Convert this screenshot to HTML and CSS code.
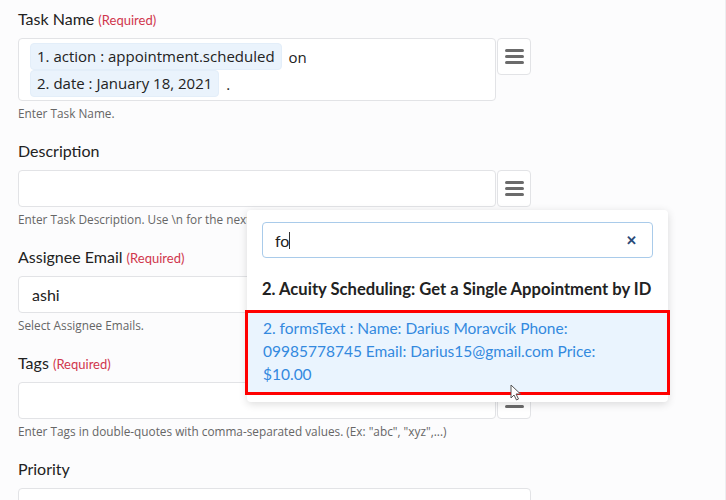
FILE: index.html
```html
<!DOCTYPE html>
<html lang="en">
  <head>
    <meta charset="UTF-8" />
    <meta name="viewport" content="width=device-width, initial-scale=1.0" />
    <title>Task Form</title>
    <link rel="stylesheet" href="styles.css">
  </head>
  <body>
    <div class="page">
      <div class="form">
        <div class="field">
          <label>Task Name <span class="req">(Required)</span></label>
          <div class="row">
            <div class="box tall">
              <div class="line"><span class="chip">1. action : appointment.scheduled</span> <span class="plain">on</span></div>
              <div class="line"><span class="chip">2. date : January 18, 2021</span> <span class="plain">.</span></div>
            </div>
            <button class="menu"><span></span><span></span><span></span></button>
          </div>
          <p class="help">Enter Task Name.</p>
        </div>

        <div class="field">
          <label>Description</label>
          <div class="row">
            <div class="box"></div>
            <button class="menu"><span></span><span></span><span></span></button>
          </div>
          <p class="help">Enter Task Description. Use \n for the next line.</p>
        </div>

        <div class="field">
          <label>Assignee Email <span class="req">(Required)</span></label>
          <div class="row">
            <div class="box wide"><span class="value">ashi</span></div>
          </div>
          <p class="help">Select Assignee Emails.</p>
        </div>

        <div class="field">
          <label>Tags <span class="req">(Required)</span></label>
          <div class="row">
            <div class="box"></div>
            <button class="menu"><span></span><span></span><span></span></button>
          </div>
          <p class="help">Enter Tags in double-quotes with comma-separated values. (Ex: "abc", "xyz",...)</p>
        </div>

        <div class="field">
          <label>Priority</label>
          <div class="row">
            <div class="box wide"></div>
          </div>
        </div>
      </div>

      <div class="popup">
        <div class="search">
          <span class="typed">fo</span><span class="caret"></span>
          <span class="clear">&#x2715;</span>
        </div>
        <h4>2. Acuity Scheduling: Get a Single Appointment by ID</h4>
        <div class="option">2. formsText : Name: Darius Moravcik Phone: 09985778745 Email: Darius15@gmail.com Price: $10.00</div>
      </div>

      <svg class="pointer" width="12" height="18" viewBox="0 0 12 18">
        <path d="M1 1 L1 14 L4 11 L6.5 16 L8.5 15 L6 10 L10.5 10 Z" fill="#fff" stroke="#555" stroke-width="1"/>
      </svg>
    </div>
  </body>
</html>
```

FILE: styles.css
```css
body {
  margin: 0;
  background: #fcfcfd;
  font-family: Lato, "Open Sans", sans-serif;
  color: #222;
}
.page {
  position: relative;
  width: 725px;
  height: 500px;
  border-right: 1px solid #ededf0;
  overflow: hidden;
}
.form {
  width: 513px;
  padding: 8px 0 0 18px;
}
.field {
  margin-bottom: 19px;
}
label {
  display: block;
  height: 22px;
  font-size: 16px;
  line-height: 22px;
  margin-bottom: 8px;
}
.req {
  color: #d0364c;
  font-size: 13px;
  line-height: 1;
}
.row {
  display: flex;
  gap: 1px;
  align-items: flex-start;
}
.box {
  box-sizing: border-box;
  width: 478px;
  height: 37px;
  background: #fff;
  border: 1px solid #e2e3e6;
  border-radius: 4px;
  padding: 0 13px;
  display: flex;
  align-items: center;
}
.box.wide {
  width: 513px;
}
.box.tall {
  height: 63px;
  padding: 5px 11px;
  flex-direction: column;
  align-items: flex-start;
  gap: 2px;
}
.line {
  display: flex;
  align-items: center;
  gap: 7px;
  height: 25px;
}
.chip {
  font-family: "Open Sans", sans-serif;
  font-size: 15px;
  line-height: 25px;
  padding: 0 6px;
  background: #eaf3fc;
  border: 1px solid #e3eef9;
  border-radius: 4px;
  color: #222;
}
.plain {
  font-family: "Open Sans", sans-serif;
  font-size: 15px;
}
.value {
  font-size: 16px;
}
.menu {
  box-sizing: border-box;
  width: 34px;
  height: 37px;
  background: #fff;
  border: 1px solid #e2e3e6;
  border-radius: 4px;
  display: flex;
  flex-direction: column;
  justify-content: center;
  align-items: center;
  gap: 3px;
  padding: 0;
}
.menu span {
  display: block;
  width: 19px;
  height: 3px;
  border-radius: 2px;
  background: #6b6b6b;
}
.help {
  margin: 4px 0 0;
  font-family: "Open Sans", sans-serif;
  font-size: 11.8px;
  line-height: 16px;
  color: #666;
  white-space: nowrap;
}
.popup {
  position: absolute;
  left: 247px;
  top: 210px;
  width: 421px;
  box-sizing: border-box;
  padding: 12px 0 10px;
  background: #fff;
  border-radius: 4px;
  box-shadow: 0 2px 8px rgba(0, 0, 0, 0.14);
}
.search {
  box-sizing: border-box;
  margin: 0 15px;
  height: 36px;
  border: 1px solid #a9cbea;
  border-radius: 4px;
  display: flex;
  align-items: center;
  padding: 0 12px;
  font-size: 16px;
}
.caret {
  width: 1px;
  height: 17px;
  background: #333;
}
.clear {
  margin-left: auto;
  color: #2b4a78;
  font-size: 13px;
  font-weight: bold;
  margin-right: 3px;
}
.popup h4 {
  margin: 19px 15px 12px;
  font-size: 16.6px;
  font-weight: bold;
  line-height: 24px;
  color: #222;
}
.option {
  margin: 0 1px;
  padding: 4px 40px 6px 15px;
  background: #eaf4fe;
  color: #3389de;
  font-size: 15.5px;
  line-height: 23px;
  outline: 3px solid #ff0000;
}
.pointer {
  position: absolute;
  left: 510px;
  top: 384px;
}
```
